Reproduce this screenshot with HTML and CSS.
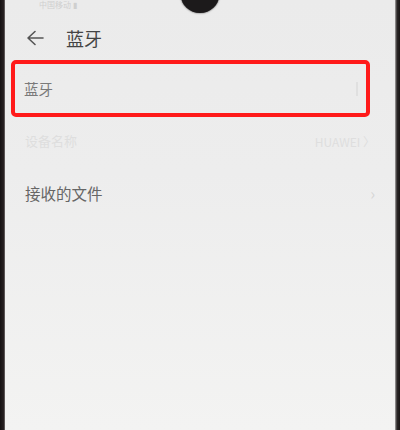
FILE: index.html
```html
<!DOCTYPE html>
<html lang="zh">
<head>
<meta charset="utf-8">
<link rel="stylesheet" href="styles.css">
</head>
<body>
<div class="phone">
  <div class="bezel bezel-left"></div>
  <div class="screen">
    <div class="notch"></div>
    <div class="status"><span class="status-text">中国移动 ▮</span></div>
    <div class="header">
      <svg class="back" width="18" height="16" viewBox="0 0 18 16"><path d="M9 1.5 L2 8 L9 14.5 M2 8 H17" fill="none" stroke="#555" stroke-width="1.6" stroke-linecap="round" stroke-linejoin="round"/></svg>
      <span class="title">蓝牙</span>
    </div>
    <div class="row row-hl">
      <span class="label">蓝牙</span>
      <span class="toggle"></span>
    </div>
    <div class="row row-faint">
      <span class="label faint">设备名称</span>
      <span class="value faint">HUAWEI 〉</span>
    </div>
    <div class="row row-files">
      <span class="label">接收的文件</span>
      <span class="chev">›</span>
    </div>
  </div>
  <div class="bezel bezel-right"></div>
</div>
</body>
</html>
```
FILE: styles.css
```css
html, body {
  margin: 0;
  padding: 0;
  width: 400px;
  height: 430px;
  overflow: hidden;
  background: #1a1616;
}
.phone {
  display: flex;
  width: 400px;
  height: 430px;
}
.bezel-left {
  width: 5px;
  background: linear-gradient(to right, #151112, #2a2324 80%, #8a8686);
}
.bezel-right {
  width: 5px;
  background: linear-gradient(to right, #a9a7a7, #2b2727 40%, #191515);
}
.screen {
  flex: 1;
  position: relative;
  background: linear-gradient(to bottom, #ebebeb 0%, #ededed 40%, #f3f3f2 100%);
  font-family: "Noto Sans CJK SC", "Noto Sans", sans-serif;
  display: flex;
  flex-direction: column;
}
.notch {
  position: absolute;
  left: 176px;
  top: -22px;
  width: 38px;
  height: 35px;
  border-radius: 50%;
  background: #1c1a1b;
  box-shadow: 0 0 2px #333;
}
.status {
  height: 18px;
  padding-left: 34px;
  display: flex;
  align-items: flex-start;
}
.status-text {
  font-size: 8px;
  line-height: 9px;
  color: #cfcfcf;
}
.header {
  height: 40px;
  display: flex;
  align-items: center;
  padding-left: 21px;
}
.back {
  margin-right: 22px;
}
.title {
  font-size: 18px;
  color: #444;
  line-height: 20px;
}
.row {
  display: flex;
  align-items: center;
  justify-content: space-between;
}
.row-hl {
  margin: 2px 25px 0 6px;
  height: 49px;
  border: 4px solid #ff1a1a;
  border-radius: 5px;
  padding: 0 8px 0 9px;
}
.label {
  font-size: 14.5px;
  color: #7a7a7a;
  line-height: 18px;
}
.toggle {
  width: 12px;
  height: 14px;
  border-right: 2px solid #dcdcdc;
  opacity: 0.7;
}
.row-faint {
  height: 48px;
  padding: 0 20px 0 20px;
}
.faint {
  color: #dedede;
  font-size: 13px;
}
.value {
  font-size: 12px;
}
.row-files {
  height: 56px;
  padding: 0 20px 0 20px;
}
.row-files .label {
  font-size: 15.5px;
  color: #666;
}
.chev {
  color: #d6d6d6;
  font-size: 16px;
}
```
